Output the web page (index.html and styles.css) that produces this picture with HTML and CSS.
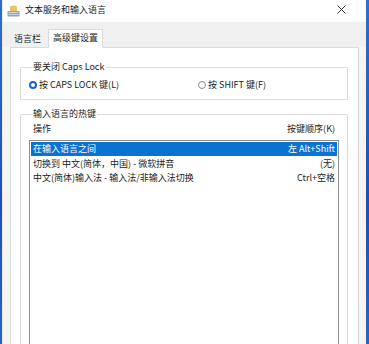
FILE: index.html
```html
<!DOCTYPE html>
<html lang="zh-CN">
<head>
<meta charset="utf-8">
<title>文本服务和输入语言</title>
<link rel="stylesheet" href="styles.css">
</head>
<body>
<div class="window">
  <div class="titlebar">
    <svg class="app-icon" width="13" height="12" viewBox="0 0 13 12">
      <path d="M3 1.5 Q6.5 -0.5 10 1.5 L10 6 L3 6 Z" fill="#e9c36a"/>
      <rect x="0.5" y="6" width="12" height="5.5" rx="0.8" fill="#8fa3bb"/>
      <rect x="1.5" y="7" width="10" height="1" fill="#c9d4e2"/>
      <rect x="1.5" y="9" width="10" height="1" fill="#c9d4e2"/>
    </svg>
    <span class="title">文本服务和输入语言</span>
    <svg class="close" width="9" height="9" viewBox="0 0 9 9">
      <path d="M0.5 0.5 L8.5 8.5 M8.5 0.5 L0.5 8.5" stroke="#333" stroke-width="1"/>
    </svg>
  </div>
  <div class="tabstrip">
    <div class="tab">语言栏</div>
    <div class="tab selected">高级键设置</div>
  </div>
  <div class="panel">
    <fieldset class="group caps">
      <legend>要关闭 Caps Lock</legend>
      <div class="radios">
        <label class="radio"><span class="dot on"></span>按 CAPS LOCK 键(L)</label>
        <label class="radio second"><span class="dot"></span>按 SHIFT 键(F)</label>
      </div>
    </fieldset>
    <fieldset class="group hotkeys">
      <legend>输入语言的热键</legend>
      <div class="header">
        <span>操作</span>
        <span>按键顺序(K)</span>
      </div>
      <div class="listbox">
        <div class="row selected"><span>在输入语言之间</span><span>左 Alt+Shift</span></div>
        <div class="row"><span>切换到 中文(简体，中国) - 微软拼音</span><span>(无)</span></div>
        <div class="row"><span>中文(简体)输入法 - 输入法/非输入法切换</span><span>Ctrl+空格</span></div>
      </div>
    </fieldset>
  </div>
</div>
</body>
</html>
```
FILE: styles.css
```css
* { box-sizing: border-box; }
html, body {
  margin: 0;
  height: 100%;
  overflow: hidden;
}
body {
  background: linear-gradient(180deg, #2f6fc8 0%, #1f4fb0 60%, #2b63c0 100%);
  font-family: "Noto Sans CJK SC", "Noto Sans", sans-serif;
  font-size: 9px;
  color: #1b1b1b;
}
.window {
  margin-left: 2px;
  width: 364px;
  height: 344px;
  background: #f7f5f4;
  border-left: 1px solid #e6eaf0;
  display: flex;
  flex-direction: column;
}
.titlebar {
  height: 22px;
  background: #ffffff;
  display: flex;
  align-items: center;
  padding-left: 4px;
  padding-right: 20px;
}
.app-icon { margin-right: 5px; margin-top: -1px; }
.title { flex: 1; line-height: 12px; margin-top: -2px; }
.close { margin-top: -3px; }
.tabstrip {
  height: 25px;
  background: #f0f0f0;
  display: flex;
  align-items: flex-end;
  padding-left: 7px;
}
.tab {
  height: 17px;
  line-height: 15px;
  padding: 0 4px 0 3px;
  border: 1px solid transparent;
  border-bottom: none;
}
.tab.selected {
  height: 19px;
  line-height: 16px;
  background: #ffffff;
  border-color: #dadada;
  padding: 0 4px;
  margin-left: 2px;
  margin-bottom: -1px;
  position: relative;
}
.panel {
  margin: 0 7px 0 7px;
  flex: 1;
  background: #ffffff;
  border: 1px solid #dadada;
  border-bottom: none;
  padding: 0 10px 0 9px;
  overflow: hidden;
}
.group {
  margin: 0;
  border: 1px solid #dcdcdc;
  border-radius: 1px;
  padding: 0 8px;
  min-width: 0;
}
.group legend {
  padding: 0 1px;
  margin-left: 3px;
  line-height: 12px;
}
.caps {
  margin-top: 13px;
  padding-top: 6px;
  padding-bottom: 8px;
}
.radios {
  display: flex;
  line-height: 12px;
}
.radio {
  display: flex;
  align-items: center;
  gap: 2px;
  width: 169px;
}
.radio.second { width: auto; }
.dot {
  width: 8px;
  height: 8px;
  border-radius: 50%;
  border: 1px solid #8a8a8a;
  background: #fff;
}
.dot.on {
  border: 2px solid #1a63c6;
}
.caps .radio:first-child { margin-left: 0; }
.hotkeys {
  margin-top: 8px;
  padding-top: 3px;
  padding-bottom: 0;
  height: 400px;
}
.header {
  display: flex;
  justify-content: space-between;
  padding: 0 4px;
  line-height: 12px;
}
.listbox {
  margin-top: 5px;
  border: 1px solid #8f8f8f;
  padding: 1px 1px;
  height: 300px;
  background: #fff;
}
.row {
  display: flex;
  justify-content: space-between;
  height: 14.5px;
  line-height: 13px;
  padding: 0 2px 0 2px;
  white-space: nowrap;
}
.row.selected {
  background: #0a72d1;
  color: #ffffff;
  height: 13.5px;
  margin-bottom: 1px;
}
```
